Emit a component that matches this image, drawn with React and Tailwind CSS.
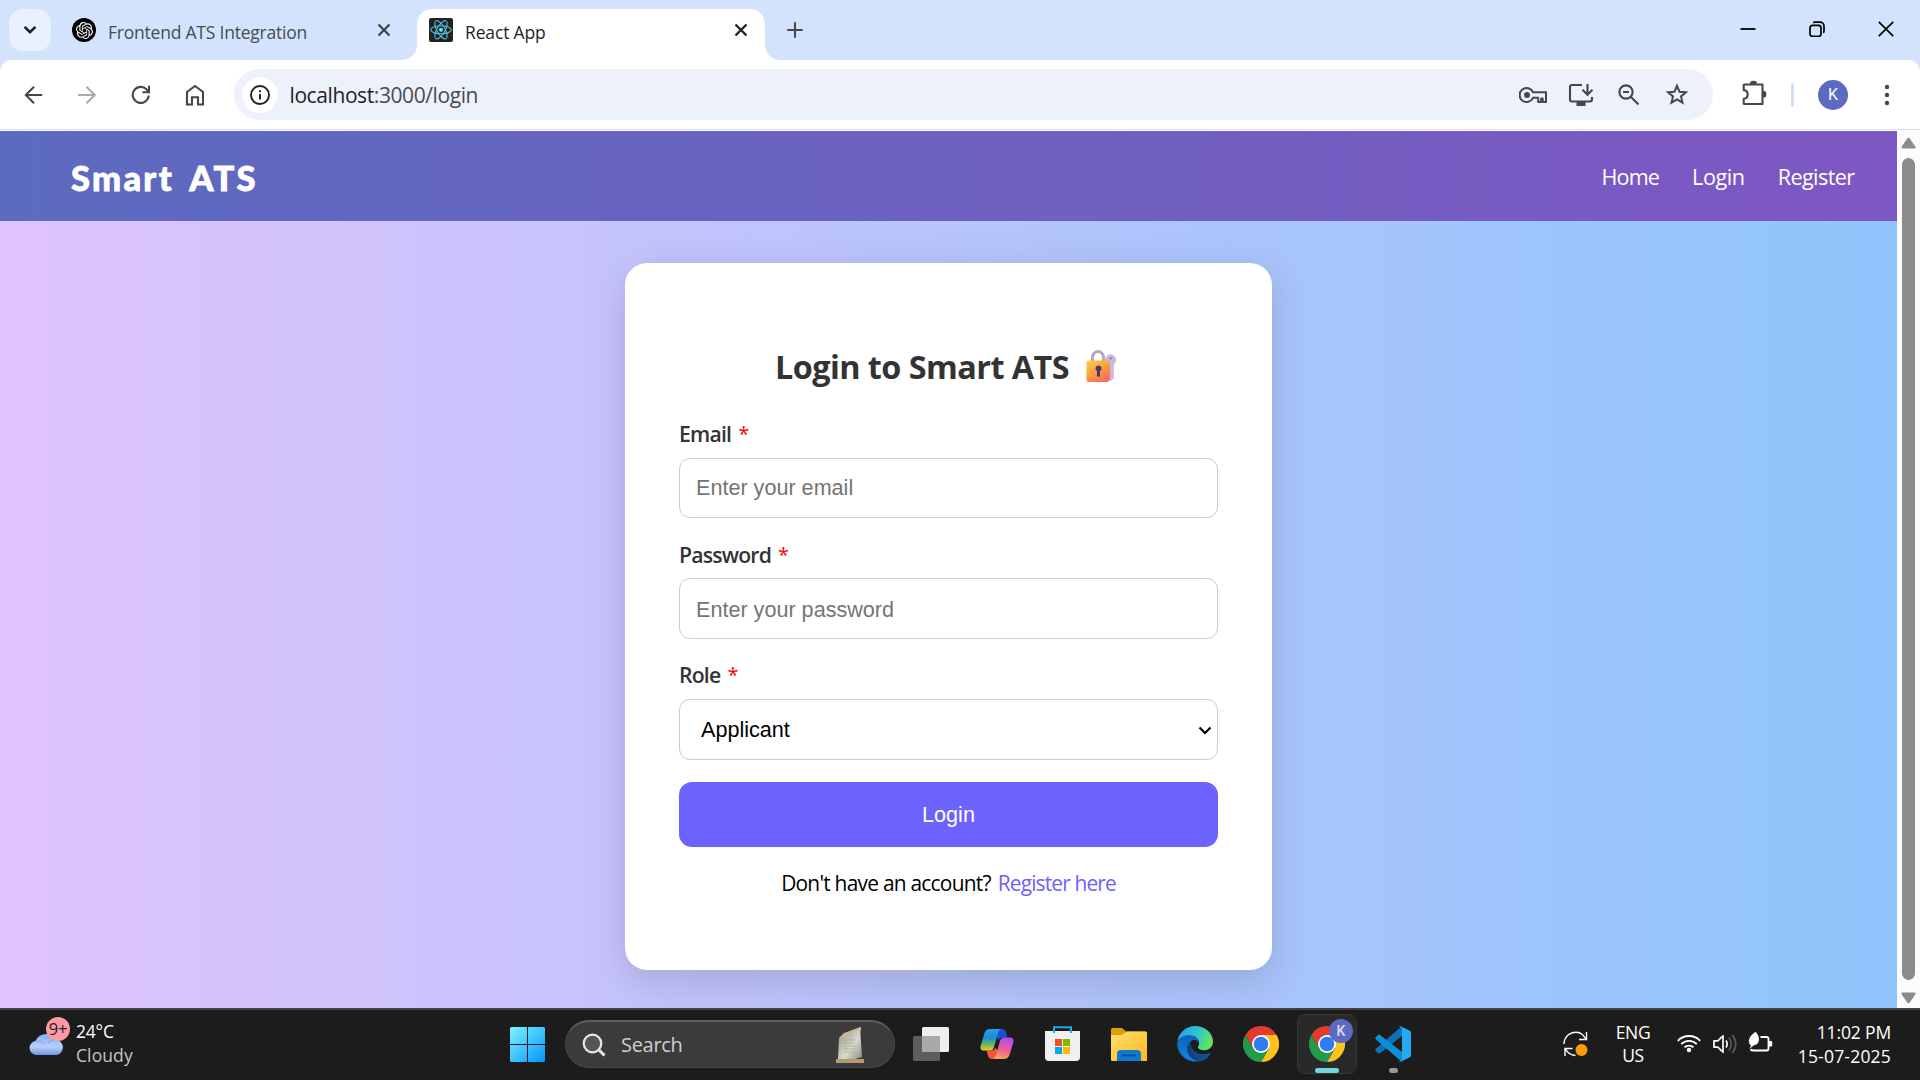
import React from "react";
import { SiOpenai } from "react-icons/si";

const ui = "font-['Segoe_UI','Open_Sans',sans-serif]";

function ReactMark() {
  return (
    <svg width="24" height="24" viewBox="0 0 24 24" fill="none" stroke="#53c1de" strokeWidth="1.1">
      <rect width="24" height="24" rx="2" fill="#222" stroke="none" />
      <ellipse cx="12" cy="11.8" rx="10.3" ry="4" />
      <ellipse cx="12" cy="11.8" rx="10.3" ry="4" transform="rotate(60 12 11.8)" />
      <ellipse cx="12" cy="11.8" rx="10.3" ry="4" transform="rotate(120 12 11.8)" />
      <circle cx="12" cy="11.8" r="2.1" fill="#61dafb" stroke="none" />
    </svg>
  );
}

function Cross({ color, className }) {
  return (
    <svg width="14" height="14" viewBox="0 0 14 14" className={className} stroke={color} strokeWidth="2.3" fill="none">
      <path d="M1.5 1.5l11 11M12.5 1.5l-11 11" />
    </svg>
  );
}

function TabStrip() {
  return (
    <div className="flex h-[60px] bg-[#d3e3fd]">
      <div className="ml-[9px] mt-[9px] flex size-[42px] items-center justify-center rounded-[14px] bg-[#e9f1fe]">
        <svg width="14" height="10" viewBox="0 0 14 10" fill="none" stroke="#1f1f1f" strokeWidth="2.6">
          <path d="M1.6 1.8L7 7.2l5.4-5.4" />
        </svg>
      </div>
      <div className="flex h-[60px] w-[366px] items-center pl-[21px]">
        <div className="flex size-6 items-center justify-center rounded-full bg-black text-white">
          <SiOpenai size={17} />
        </div>
        <span className="ml-[12px] mt-[3px] w-[262px] whitespace-nowrap text-[17.5px] leading-6 tracking-[-0.22px] text-[#474b50]">Frontend ATS Integration</span>
        <Cross color="#454746" className="ml-[7px]" />
      </div>
      <div className="relative mt-[9px] flex h-[51px] w-[348px] items-center rounded-t-[15px] bg-white pl-3">
        <svg className="absolute bottom-0 -left-[15px]" width="15" height="15" viewBox="0 0 15 15" fill="#fff"><path d="M15 0v15H0A15 15 0 0 0 15 0z" /></svg>
        <svg className="absolute bottom-0 -right-[15px]" width="15" height="15" viewBox="0 0 15 15" fill="#fff"><path d="M0 0v15h15A15 15 0 0 1 0 0z" /></svg>
        <div className="mb-[9px]"><ReactMark /></div>
        <span className="-mt-[6px] ml-[12px] w-[269px] whitespace-nowrap text-[17.5px] leading-6 tracking-[-0.15px] text-[#1f1f1f]">React App</span>
        <Cross color="#1f1f1f" className="mb-[9px]" />
      </div>
      <svg className="ml-[22px] mt-[22px]" width="16" height="16" viewBox="0 0 16 16" fill="none" stroke="#474747" strokeWidth="2.1"><path d="M8 .3v15.4M.3 8h15.4" /></svg>
      <div className="ml-auto mr-[26px] mt-[21px] flex">
        <svg width="16" height="16" viewBox="0 0 16 16" stroke="#000" strokeWidth="1.8"><path d="M.5 8h15" /></svg>
        <svg className="ml-[53px]" width="16" height="16" viewBox="0 0 16 16" fill="none" stroke="#000" strokeWidth="1.7">
          <rect x="1" y="4.4" width="11" height="11" rx="2.5" />
          <path d="M4.2 1.7Q5 1.1 6 1.1h5a4 4 0 0 1 4 4v5q0 1-.7 1.8" />
        </svg>
        <svg className="ml-[53px]" width="16" height="16" viewBox="0 0 16 16" fill="none" stroke="#000" strokeWidth="1.7"><path d="M.8.8l14.4 14.4M15.2.8L.8 15.2" /></svg>
      </div>
    </div>
  );
}

function Toolbar() {
  return (
    <div className="bg-[#d3e3fd]">
      <div className="flex h-[71px] items-center rounded-t-[12px] border-b border-white bg-white">
        <div className="flex h-[70px] w-full items-center border-b border-[#dcdcdc]">
          <svg className="ml-[24px]" width="20" height="20" viewBox="0 0 20 20" fill="none" stroke="#454746" strokeWidth="2"><path d="M18.2 10H2M10 1.7L1.8 10l8.2 8.3" /></svg>
          <svg className="ml-[33px]" width="20" height="20" viewBox="0 0 20 20" fill="none" stroke="#ababab" strokeWidth="2"><path d="M1 10h16.2M9.5 1.7l8.2 8.3-8.2 8.3" /></svg>
          <svg className="ml-[34px]" width="20" height="20" viewBox="0 0 20 20" fill="none" stroke="#454746" strokeWidth="2.1"><path d="M17.7 10.5A8 8 0 1 1 15.6 4.4L17.9 6.7M18 .8v6.4h-6.6" /></svg>
          <svg className="ml-[34px]" width="20" height="22" viewBox="0 0 20 22" fill="none" stroke="#454746" strokeWidth="2.1"><path d="M2 8L10 2l8 6v12.5h-5v-7.3H7v7.3H2z" /></svg>
          <div className="ml-[29px] flex h-[51px] w-[1479px] items-center rounded-full bg-[#ecf1fa]">
            <div className="ml-[8px] flex size-9 items-center justify-center rounded-full bg-white">
              <svg width="20" height="20" viewBox="0 0 20 20" fill="none" stroke="#1f1f1f" strokeWidth="1.9"><circle cx="10" cy="10" r="9" /><path d="M10 9v5.5M10 5.2v2.1" /></svg>
            </div>
            <span className="ml-[11.5px] whitespace-nowrap text-[21px] leading-7 tracking-[-0.41px] text-[#1f1f1f]">localhost<span className="text-[#474b50]">:3000/login</span></span>
            <svg className="ml-auto" width="28" height="18" viewBox="0 0 28 18" fill="none" stroke="#454746" strokeWidth="2">
              <path d="M14 6.2A7 7 0 1 0 14 11.8h5.2v4.2h3v-3.5h1.5v3.5H27V6.2z" strokeLinejoin="round" />
              <circle cx="8" cy="9" r="3" fill="#454746" stroke="none" />
            </svg>
            <svg className="ml-[21px]" width="26" height="24" viewBox="0 0 26 24" fill="none" stroke="#454746" strokeWidth="2.1">
              <path d="M14 2H4Q2 2 2 4v12.5q0 2 2 2h18q2 0 2-2V14M19.5 1v10M14.5 6.8l5 5 5-5" />
              <path d="M8.5 21h9" strokeWidth="4" />
            </svg>
            <svg className="ml-[24px]" width="22" height="22" viewBox="0 0 22 22" fill="none" stroke="#454746" strokeWidth="2.1"><circle cx="8" cy="8" r="6.6" /><path d="M13 13l7.5 7.5M5 8h6" /></svg>
            <svg className="ml-[25px] mr-[24px]" width="24" height="23" viewBox="0 0 24 23" fill="none" stroke="#454746" strokeWidth="2"><path d="M12 2.8l2.5 5.9 6.4.5-4.9 4.2 1.5 6.2-5.500-3.300-5.500 3.300L8 13.400 3.100 9.200l6.400-.5z" /></svg>
          </div>
          <svg className="-mt-[3px] ml-[28px]" width="26" height="26" viewBox="0 0 26 26" fill="none" stroke="#454746" strokeWidth="2.1">
            <path d="M3.5 4.5h18v19.5h-18q-.8 0-.8-.8v-4.5q4-.4 4-4.3t-4-4.3V5.3q0-.8.8-.8z" strokeLinejoin="round" />
            <path d="M10 4a2.5 2.5 0 0 1 5 0zM22 11.7a2.5 2.5 0 0 1 0 5z" fill="#454746" stroke="none" />
            <path d="M10 3.5a2.5 1.8 0 0 1 5 0M22.5 11.7a1.8 2.5 0 0 1 0 5" />
          </svg>
          <div className="ml-[24px] h-6 w-[3px] rounded-full bg-[#d0e0fb]" />
          <div className="ml-[24px] flex size-[30px] items-center justify-center rounded-full bg-[#5c6bc0] font-['Roboto',sans-serif] text-[16px] text-white">K</div>
          <svg className="ml-[36px]" width="6" height="22" viewBox="0 0 6 22" fill="#454746"><circle cx="3" cy="3" r="2.2" /><circle cx="3" cy="11" r="2.2" /><circle cx="3" cy="19" r="2.2" /></svg>
        </div>
      </div>
    </div>
  );
}

function LockKey() {
  return (
    <svg className="ml-[17px]" width="32" height="34" viewBox="0 0 32 34">
      <defs>
        <linearGradient id="lockBody" x1="0" y1="0" x2=".6" y2="1"><stop stopColor="#ffcf4a" /><stop offset=".55" stopColor="#f9a03c" /><stop offset="1" stopColor="#fb6f60" /></linearGradient>
      </defs>
      <path d="M6.5 13V8.5a5.5 6 0 0 1 11 0V13" fill="none" stroke="#b7a9bf" strokeWidth="3" />
      <path d="M21.5 15.5a5.6 5.6 0 1 1 6.3 0v14l-3 2.5-3.300-2.500z" fill="#cbb9dd" />
      <circle cx="24.8" cy="9.3" r="1.4" fill="#9a86b5" />
      <path d="M2.5 11.500h19.500l2 3v14.500q0 4-3.500 4h-18Q.5 33 .5 30.500v-17q0-2 2-2z" fill="url(#lockBody)" />
      <path d="M12.5 16.500a3 3 0 0 1 1.500 5.600v5.400h-3v-5.400a3 3 0 0 1 1.500-5.600z" fill="#433b6b" />
    </svg>
  );
}

function Label({ children }) {
  return (
    <div className="flex h-[30px] gap-[7px] whitespace-nowrap text-[21.2px] font-semibold leading-[30px] tracking-[-0.8px] text-[#333]">
      {children} <span className="text-[20px] font-normal text-[#f00]">*</span>
    </div>
  );
}

const field = "w-full rounded-[11px] border border-[#ccc] bg-white font-['Arial','Liberation_Sans',sans-serif] text-[21.6px] placeholder:text-[#757575]";

function LoginPage() {
  return (
    <div className="flex h-[877px]">
      <div className="flex w-[1897px] flex-col">
        <header className="flex h-[90px] items-center bg-[linear-gradient(to_right,#5c6bc0,#7e57c2)] text-white">
          <h1 className="ml-[71px] mt-[3px] whitespace-nowrap font-['Comic_Sans_MS','Lato',sans-serif] text-[34.500px] font-black leading-[46px] tracking-[2.300px] [-webkit-text-stroke:0.800px_white] [word-spacing:6px]">Smart ATS</h1>
          <nav className="ml-auto mr-[42.500px] mt-[2px] flex gap-[33px] whitespace-nowrap text-[21.600px] leading-8">
            <a className="tracking-[-0.900px]">Home</a><a className="tracking-[-0.400px]">Login</a><a className="tracking-[-0.600px]">Register</a>
          </nav>
        </header>
        <main className="flex flex-1 justify-center bg-[linear-gradient(to_right,#e0c3fc,#8ec5fc)] pt-[42px]">
          <form className="flex h-[707px] w-[647px] flex-col rounded-[22px] bg-white px-[54px] pt-[80px] shadow-[0_11px_40px_rgba(0,0,0,0.15)]">
            <h2 className="flex h-[46px] items-center justify-center whitespace-nowrap pr-[4px] text-[32.400px] font-bold leading-[46px] tracking-[-0.560px] text-[#333]">
              Login to Smart ATS <LockKey />
            </h2>
            <div className="mt-[30px]"><Label>Email</Label></div>
            <input className={field + " mt-[9px] h-[60px] px-4"} placeholder="Enter your email" />
            <div className="mt-[22px]"><Label>Password</Label></div>
            <input className={field + " mt-[8px] h-[61px] px-4 pt-[2px]"} placeholder="Enter your password" />
            <div className="mt-[21px]"><Label>Role</Label></div>
            <div className={field + " mt-[9px] flex h-[61px] items-center justify-between pl-[21px] pr-[5px] pt-px text-black"}>
              Applicant
              <svg width="14" height="9" viewBox="0 0 14 9" fill="none" stroke="#000" strokeWidth="2.2"><path d="M1.5 1.5L7 7l5.5-5.500" /></svg>
            </div>
            <button type="button" className="mt-[22px] h-[65px] w-full rounded-[13px] bg-[#6c63ff] pt-[2px] font-['Arial','Liberation_Sans',sans-serif] text-[21.600px] text-white">Login</button>
            <p className="mt-[20px] flex justify-center gap-[7px] whitespace-nowrap text-[20.900px] leading-[32px] text-black">
              <span className="tracking-[-0.750px]">Don't have an account?</span> <a className="tracking-[-0.850px] text-[#6c63ff]">Register here</a>
            </p>
          </form>
        </main>
      </div>
      <div className="flex w-[23px] flex-col items-center bg-[#fcfcfc]">
        <svg className="mt-[6px]" width="15" height="12" viewBox="0 0 15 12" fill="#8b8b8b"><path d="M6.2 1.5q1.3-1.500 2.600 0l5.500 8q.8 1.900-1 2H1.700q-1.800-.1-1-2z" /></svg>
        <div className="mt-[9px] h-[822px] w-[13px] rounded-full bg-[#8b8b8b]" />
        <svg className="mt-[12px]" width="15" height="12" viewBox="0 0 15 12" fill="#8b8b8b"><path d="M6.2 10.500q1.300 1.500 2.600 0l5.500-8q.8-1.900-1-2H1.700q-1.800.1-1 2z" /></svg>
      </div>
    </div>
  );
}

function Slot({ children }) {
  return <div className="flex w-[66px] shrink-0 items-center justify-center">{children}</div>;
}

function ChromeMark() {
  return (
    <svg width="36" height="36" viewBox="0 0 36 36">
      <path d="M2.4 9A18 18 0 0 1 33.6 9H18L10.2 22.5z" fill="#e33b2e" />
      <path d="M33.6 9A18 18 0 0 1 18 36l7.8-13.500L18 9z" fill="#fcc31e" />
      <path d="M18 36A18 18 0 0 1 2.4 9l7.8 13.500h15.600z" fill="#249a48" />
      <circle cx="18" cy="18" r="9" fill="#fff" />
      <circle cx="18" cy="18" r="7.3" fill="#2f7cf0" />
    </svg>
  );
}

function EdgeMark() {
  return (
    <svg width="36" height="36" viewBox="0 0 36 36">
      <defs>
        <linearGradient id="edgeTop" x1="0" y1=".3" x2="1" y2=".6"><stop stopColor="#269de8" /><stop offset=".5" stopColor="#2fc3d4" /><stop offset="1" stopColor="#68e650" /></linearGradient>
        <linearGradient id="edgeLow" x1="0" y1="0" x2="0" y2="1"><stop stopColor="#0d63b5" /><stop offset="1" stopColor="#0f86dc" /></linearGradient>
        <linearGradient id="edgeDeep" x1="0" y1="0" x2="1" y2="0"><stop stopColor="#0e3f7c" /><stop offset="1" stopColor="#1455a0" /></linearGradient>
      </defs>
      <path d="M.4 15.5C1.7 6.5 9 0 18 0c10.5 0 18 7.5 18 15.5 0 5-3.600 8.700-8.500 8.700-4 0-6.600-1.500-6.600-3 0-1.200 1.300-1.500 1.300-4 0-4-4-7.400-9.700-7.400C6.500 9.800 2 13 .4 15.500z" fill="url(#edgeTop)" />
      <path d="M.2 17C1.2 12.500 6 9.300 12 9.300c6 0 10.200 3.500 10.200 8-.6-2.300-2.500-3.300-4.700-3.300-3.500 0-5.500 2.500-5.500 6 0 8 6 13 12 14.500A18 18 0 0 1 .2 17z" fill="url(#edgeLow)" />
      <path d="M13.5 16C10.500 18 9.500 21 10 24c1 6 6 11 12.500 11.500 5-.9 9-4.200 10.900-7.800.3-.8-.3-1.300-1-.9-7.900 4.200-18.900-.8-18.900-10.800z" fill="url(#edgeDeep)" />
    </svg>
  );
}

function CopilotMark() {
  return (
    <svg width="34" height="32" viewBox="0 0 34 32">
      <defs>
        <linearGradient id="cpA" x1="0" y1="0" x2="0" y2="1"><stop stopColor="#1fa4ee" /><stop offset=".4" stopColor="#1b8bd8" /><stop offset=".7" stopColor="#5ab860" /><stop offset="1" stopColor="#efd11c" /></linearGradient>
        <linearGradient id="cpB" x1=".6" y1="0" x2=".3" y2="1"><stop stopColor="#a94ff0" /><stop offset=".5" stopColor="#ee5a9b" /><stop offset="1" stopColor="#fca35a" /></linearGradient>
      </defs>
      <path d="M19 1h3q3 0 4 3l1.500 5.500h-5q-3 0-4 3L16 9z" fill="#1b4fcf" />
      <path d="M15 31h-3q-3 0-4-3l-1.500-5.500h5q3 0 4-3L18 23z" fill="#f4533f" />
      <path d="M10 1h11q-2 .6-3 4l-4 14q-1 3.500-4 3.500H4q-4.500 0-3.300-5L4.500 5Q6 1 10 1z" fill="url(#cpA)" />
      <path d="M24 31H13q2-.6 3-4l4-14q1-3.500 4-3.500h6q4.500 0 3.300 5L29.500 27Q28 31 24 31z" fill="url(#cpB)" />
    </svg>
  );
}

function Taskbar() {
  return (
    <footer className="flex h-[72px] border-t-2 border-[#404040] bg-[#1c1c1c] text-white">
      <div className="flex w-[494px]">
        <div className="relative ml-[29px] mt-[7px] h-[40px] w-[41px]">
          <svg width="36" height="40" viewBox="0 0 36 40">
            <defs><linearGradient id="cloud" x1="0" y1="0" x2="0" y2="1"><stop stopColor="#7faef0" /><stop offset=".6" stopColor="#b7d2fb" /><stop offset="1" stopColor="#6f94dc" /></linearGradient></defs>
            <path d="M7 38a7 7 0 0 1-.5-13.900A11.500 11.500 0 0 1 27 22.500 7.900 7.900 0 0 1 28 38z" fill="url(#cloud)" />
            <path d="M6.500 24.100q5-1 8.500 2.500M19 26q3-4 8-3.500" fill="none" stroke="#7ea6ea" strokeWidth="1" />
          </svg>
          <div className="absolute right-0 top-0 flex size-6 items-center justify-center whitespace-nowrap rounded-full bg-[#fd99a3] text-[16.500px] leading-6 tracking-[-0.200px] text-[#1c1c1c]">9+</div>
        </div>
        <div className="ml-[6px] mt-[9px] whitespace-nowrap text-[17.500px] leading-6">
          <div className="tracking-[-0.200px]">24°C</div>
          <div className="tracking-[0.100px] text-[#c4c4c4]">Cloudy</div>
        </div>
      </div>
      <div className="flex h-[68px] items-center">
        <Slot>
          <svg width="35" height="35" viewBox="0 0 35 35">
            <defs><linearGradient id="win" gradientUnits="userSpaceOnUse" x1="0" y1="0" x2="35" y2="35"><stop stopColor="#7df3ff" /><stop offset="1" stopColor="#0594ff" /></linearGradient></defs>
            <path d="M1.5 0H17v17H0V1.500Q0 0 1.500 0zM18 0h15.500Q35 0 35 1.500V17H18zM0 18h17v17H1.500Q0 35 0 33.500zM18 18h17v15.500q0 1.500-1.500 1.500H18z" fill="url(#win)" />
          </svg>
        </Slot>
        <div className="ml-[5px] mr-[3px] flex h-12 w-[330px] shrink-0 items-center rounded-full border border-t-2 border-[#484848] border-t-[#5c5c5c] bg-[#3b3b3b]">
          <svg className="ml-[16px]" width="24" height="24" viewBox="0 0 24 24" fill="none" stroke="#e3e6ea"><circle cx="10.500" cy="10.500" r="8.800" strokeWidth="2.200" fill="#555" /><path d="M17 17l5.500 5.500" strokeWidth="3" /></svg>
          <span className="ml-[15px] whitespace-nowrap text-[20px] leading-7 tracking-[-0.300px] text-[#cfcfcf]">Search</span>
          <svg className="ml-auto mr-[29px]" width="30" height="38" viewBox="0 0 30 38">
            <defs><linearGradient id="slab" x1="0" y1="0" x2="1" y2="1"><stop stopColor="#8c8b7d" /><stop offset=".6" stopColor="#d8dacb" /><stop offset="1" stopColor="#8b8e80" /></linearGradient></defs>
            <path d="M1 33h28v4H1z" fill="#b39a73" />
            <path d="M3 33L4 12 9 7l12-4 4-2 2 30-7 2z" fill="url(#slab)" />
            <path d="M4 13L8 8l12-5 6-2v4l-4-1L9 11z" fill="#cdb88b" />
            <path d="M9 14h11M9 17h11M9 20h12M9 23h11M9 26h12" stroke="#aaa99a" strokeWidth=".8" />
          </svg>
        </div>
        <Slot>
          <svg width="36" height="34" viewBox="0 0 36 34">
            <rect x="9" width="27" height="25" rx="1.500" fill="#eee" />
            <rect y="9" width="27" height="25" rx="1.500" fill="#5d5d5d" />
            <path d="M9 9h18v16H9z" fill="#a9a9a9" />
          </svg>
        </Slot>
        <Slot><CopilotMark /></Slot>
        <Slot>
          <svg className="mr-px" width="35" height="36" viewBox="0 0 35 36">
            <path d="M0 5h35v26q0 4-4 4H4q-4 0-4-4z" fill="#f0f0f0" />
            <path d="M9 7V1.200h17V7" fill="none" stroke="#22a7e5" strokeWidth="2" />
            <path d="M10 13h7v7h-7z" fill="#f25022" /><path d="M18 13h7v7h-7z" fill="#7fba00" /><path d="M10 21h7v7h-7z" fill="#00a4ef" /><path d="M18 21h7v7h-7z" fill="#ffb900" />
          </svg>
        </Slot>
        <Slot>
          <svg width="36" height="33" viewBox="0 0 36 33">
            <defs><linearGradient id="fold" x1="0" y1="0" x2="1" y2="1"><stop stopColor="#ffdc74" /><stop offset="1" stopColor="#fbbb18" /></linearGradient></defs>
            <path d="M0 1.500Q0 0 1.500 0H11l4 3.500h19.500Q36 3.500 36 5v5H0z" fill="#dd9e06" />
            <path d="M0 7h11l5-3.500h18.500Q36 3.500 36 5v28H1Q0 33 0 32z" fill="url(#fold)" />
            <path d="M6 33v-7q0-4 4-4h16q4 0 4 4v7z" fill="#0f78cf" /><path d="M11 27.500h14" stroke="#064d92" strokeWidth="1.800" />
          </svg>
        </Slot>
        <Slot><EdgeMark /></Slot>
        <Slot><ChromeMark /></Slot>
        <Slot>
          <div className="relative flex size-[60px] shrink-0 items-center justify-center rounded-[8px] border border-[#353535] bg-[#292929]">
            <ChromeMark />
            <div className="absolute right-[3px] top-[4px] flex size-6 items-center justify-center rounded-full bg-[#5c6bc0] font-['Roboto',sans-serif] text-[14px] font-medium text-[#d9dcf1]">K</div>
            <div className="absolute bottom-0 left-[17px] h-[5px] w-6 rounded-full bg-[#76d4de]" />
          </div>
        </Slot>
        <Slot>
          <div className="relative size-9">
            <svg width="36" height="36" viewBox="0 0 36 36">
              <path d="M27 0v10L5 27.200Q4 28 3 27.200L.7 25q-1-1 0-2z" fill="#0b74b8" />
              <path d="M.7 11.200L3 9q1-.8 2 0L27 26v10L.7 13.200q-1-1 0-2z" fill="#0d8fd8" />
              <path d="M26 .4l8.500 4Q36 5 36 6.500v23q0 1.500-1.500 2.100l-8.500 4q-1.500.6-3-.7Q27 36 27 33V3q0-2.500-3.500-1.900Q25-.1 26 .4z" fill="#27a8f2" />
            </svg>
            <div className="absolute -bottom-[11px] left-[14px] h-[5px] w-[9px] rounded-full bg-[#999]" />
          </div>
        </Slot>
      </div>
      <div className="ml-auto flex h-[67px] items-center pr-[29px]">
        <svg width="25" height="26" viewBox="0 0 25 26" fill="none" stroke="#fff" strokeWidth="1.400">
          <path d="M1 13Q1 7 6 3.300 12-.5 18 2.500q3 2 5 5.500M23.500 1v7.500H16M2 25v-7.500h7.500M2.500 18q3 6 10 6.500" />
          <circle cx="18.500" cy="19" r="6" fill="#ff9b0b" stroke="none" />
        </svg>
        <div className="ml-[25px] w-[40px] whitespace-nowrap text-center text-[17.500px] leading-[23px] tracking-[-0.400px]">ENG<br />US</div>
        <svg className="ml-[24px]" width="24" height="19" viewBox="0 0 24 19" fill="none" stroke="#fff" strokeWidth="1.800">
          <path d="M.8 6.800a15.500 15.500 0 0 1 22.400 0M4.200 10.200a11 11 0 0 1 15.600 0M7.500 13.400a6.400 6.400 0 0 1 9 0" /><circle cx="12" cy="16" r="2.200" fill="#fff" stroke="none" />
        </svg>
        <svg className="ml-[12px]" width="24" height="20" viewBox="0 0 24 20" fill="none" stroke="#fff" strokeWidth="1.700">
          <path d="M1 6.800h3.800L10 1.800v16.400l-5.200-5H1z" strokeLinejoin="round" /><path d="M13 6.500q2.300 3.500 0 7" /><path d="M16 3.500q4.500 6.500 0 13M19.500 1q6.500 9 0 18" stroke="#5b5b5b" />
        </svg>
        <svg className="-mt-[4px] ml-[11px]" width="25" height="22" viewBox="0 0 25 22" fill="none" stroke="#fff" strokeWidth="1.800">
          <path d="M12.500 6h6q2 0 2 2v9.500q0 2-2 2H6q-2.500 0-3.500-1" />
          <path d="M21 10h2q1.200 0 1.200 1v3.500q0 1-1.200 1h-2z" fill="#fff" stroke="none" />
          <path d="M7.500.8Q1 5.500.8 9.500q0 3.500 2.200 5L1.500 18l4-3.500Q10.500 13.500 11 9 11 4 7.500.8z" fill="#fff" stroke="none" />
        </svg>
        <div className="ml-[24px] w-[94px] whitespace-nowrap text-right text-[17.500px] leading-6"><span className="tracking-[-0.150px]">11:02 PM</span><br /><span className="tracking-[0.200px]">15-07-2025</span></div>
      </div>
    </footer>
  );
}

export default function App() {
  return (
    <div className={ui + " flex h-[1080px] w-[1920px] flex-col overflow-hidden"}>
      <TabStrip />
      <Toolbar />
      <LoginPage />
      <Taskbar />
    </div>
  );
}
